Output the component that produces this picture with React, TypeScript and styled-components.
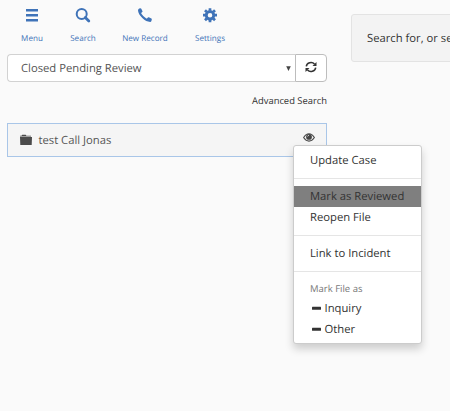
import React from 'react';
import styled, { createGlobalStyle } from 'styled-components';

const GlobalStyle = createGlobalStyle`
  * { box-sizing: border-box; }
  html, body { margin: 0; padding: 0; background: #fafafa; overflow: hidden; }
  body {
    font-family: "Open Sans", sans-serif;
    font-size: 11.25px;
    color: #333;
    text-rendering: geometricPrecision;
  }
`;

const Page = styled.div`
  width: 450px;
  height: 411px;
  display: flex;
  overflow: hidden;
  background: #fafafa;
`;

const Sidebar = styled.div`
  width: 327px;
  flex: none;
  padding-left: 7px;
`;

const Toolbar = styled.nav`
  height: 54px;
  display: grid;
  grid-template-columns: 50px 52px 72px 58px;
`;

const ToolButton = styled.a`
  display: flex;
  flex-direction: column;
  align-items: center;
  padding-top: 7px;
  color: #3f73b8;
  font-size: 8.1px;
  line-height: 12px;
  white-space: nowrap;
  svg { margin-bottom: 7.5px; }
`;

const FilterGroup = styled.div`
  display: flex;
  height: 28px;
`;

const Select = styled.div`
  flex: 1;
  display: flex;
  align-items: center;
  justify-content: space-between;
  padding: 0 4px 0 13px;
  background: #fff;
  border: 1px solid #d2d2d2;
  border-right: 0;
  border-radius: 4px 0 0 4px;
  color: #555;
`;

const RefreshButton = styled.div`
  width: 32px;
  display: flex;
  align-items: center;
  justify-content: center;
  padding-bottom: 2px;
  background: #fff;
  border: 1px solid #bdbdbd;
  border-radius: 0 4px 4px 0;
`;

const Advanced = styled.div`
  margin-top: 10px;
  height: 31px;
  line-height: 17px;
  text-align: right;
  font-size: 9.4px;
`;

const Case = styled.div`
  position: relative;
  height: 34px;
  display: flex;
  align-items: center;
  padding: 0 12px 0 12px;
  background: #f5f5f5;
  border: 1px solid #a9c6e8;
  color: #555;
`;

const CaseName = styled.span`
  flex: 1;
  margin-left: 6.500px;
`;

const Menu = styled.div`
  position: absolute;
  top: 21px;
  left: 285px;
  width: 129px;
  height: 199px;
  padding-top: 4px;
  background: #fff;
  border: 1px solid #ccc;
  border-radius: 3px;
  box-shadow: 0 5px 9px rgba(0, 0, 0, 0.18);
  color: #333;
`;

const MenuItem = styled.div<{ $active?: boolean }>`
  height: 20.6px;
  display: flex;
  align-items: center;
  padding-left: 16px;
  background: ${(p) => (p.$active ? '#7f7f7f' : 'transparent')};
  white-space: nowrap;
  svg { margin: 0 3.5px 0 2px; }
`;

const MenuHeader = styled.div`
  height: 18.5px;
  display: flex;
  align-items: center;
  padding-left: 16px;
  color: #777;
  font-size: 9.5px;
`;

const Divider = styled.div`
  height: 1px;
  margin: 7.4px 0;
  background: #e5e5e5;
`;

const Well = styled.div`
  margin: 14px 0 0 24px;
  width: 240px;
  height: 48px;
  flex: none;
  padding: 0 15px;
  line-height: 47px;
  background: #f3f3f3;
  border: 1px solid #e3e3e3;
  border-radius: 3px;
  white-space: nowrap;
`;

const MenuIcon = () => (
  <svg width="16" height="18" viewBox="0 0 16 18">
    <path d="M2 3.2h12M2 8.2h12M2 13.2h12" stroke="currentColor" strokeWidth="2.4" />
  </svg>
);

const SearchIcon = () => (
  <svg width="16" height="18" viewBox="0 0 16 18" fill="none" stroke="currentColor">
    <circle cx="6.7" cy="7" r="5" strokeWidth="2" />
    <path d="M10.3 10.6l3.5 3.5" strokeWidth="2.8" strokeLinecap="round" />
  </svg>
);

const PhoneIcon = () => (
  <svg width="16" height="18" viewBox="0 0 16 18">
    <path
      fill="currentColor"
      d="M2.2 1.6 3.5 1.3q.5 0 .8.5l1.2 2.4q.2.6-.3.9l-.8.6q-.3.5 0 1 1.9 3 4.9 4.7.6.3.9-.1l.7-.9q.4-.4.9-.1l2.6 1.3q.6.3.4.9l-.4 1.4q-.3.9-1.3 1-3.8-.1-7.8-3.9T1 3.5Q1.1 2 2.2 1.6z"
    />
  </svg>
);

const GearIcon = () => (
  <svg width="16" height="18" viewBox="0 0 16 18" fill="none" stroke="currentColor">
    <circle cx="8" cy="8.2" r="3.75" strokeWidth="2.9" />
    <g strokeWidth="2.7">
      <path d="M8 1.2v2.3M8 12.9v2.3M1 8.2h2.3M12.7 8.2H15" />
      <path d="M3 3.2l1.7 1.7M11.3 11.5l1.7 1.7M13 3.2l-1.7 1.7M4.7 11.5L3 13.2" />
    </g>
  </svg>
);

const RefreshIcon = () => (
  <svg width="12" height="12" viewBox="0 0 12 12" fill="none" stroke="#333" strokeWidth="1.5">
    <path d="M1.3 5.3C1.8 1.5 7 .2 9.5 3M10.7 6.7C10.2 10.5 5 11.8 2.5 9" />
    <path d="M11.5 1.1v4H7.5zM.5 10.9v-4h4z" fill="#333" stroke="none" />
  </svg>
);

const ArrowIcon = () => (
  <svg width="5" height="5" viewBox="0 0 5 5">
    <path d="M.2.2h4.6L2.5 5z" fill="#444" />
  </svg>
);

const FolderIcon = () => (
  <svg width="12" height="12" viewBox="0 0 12 12">
    <path d="M0 2.4V1.7h1.5L2.2.7h3.5l.7 1H11v.7zM0 3h12l-.3 8H.3z" fill="#4b4b4b" />
  </svg>
);

const EyeIcon = () => (
  <svg width="12" height="9" viewBox="0 0 12 9">
    <path d="M.6 4.5Q3 .8 6 .8t5.4 3.7Q9 8.1 6 8.1T.6 4.5z" fill="#f5f5f5" stroke="#4b4b4b" strokeWidth="1.1" />
    <circle cx="6" cy="3.9" r="2.9" fill="#444" />
    <path d="M4.6 3.5Q4.8 2.4 6 2.3" fill="none" stroke="#eee" strokeWidth=".8" />
  </svg>
);

const MinusIcon = () => (
  <svg width="9" height="5" viewBox="0 0 9 5">
    <rect y="0.8" width="9" height="3" rx=".5" fill="#333" />
  </svg>
);

const EyeSlot = styled.span`
  display: flex;
  margin-bottom: 5px;
  margin-right: -1px;
`;

export default function App() {
  return (
    <>
      <GlobalStyle />
      <Page>
        <Sidebar>
          <Toolbar>
            <ToolButton><MenuIcon />Menu</ToolButton>
            <ToolButton><SearchIcon />Search</ToolButton>
            <ToolButton><PhoneIcon />New Record</ToolButton>
            <ToolButton><GearIcon />Settings</ToolButton>
          </Toolbar>
          <FilterGroup>
            <Select>Closed Pending Review<ArrowIcon /></Select>
            <RefreshButton><RefreshIcon /></RefreshButton>
          </FilterGroup>
          <Advanced>Advanced Search</Advanced>
          <Case>
            <FolderIcon />
            <CaseName>test Call Jonas</CaseName>
            <EyeSlot><EyeIcon /></EyeSlot>
            <Menu>
              <MenuItem>Update Case</MenuItem>
              <Divider />
              <MenuItem $active>Mark as Reviewed</MenuItem>
              <MenuItem>Reopen File</MenuItem>
              <Divider />
              <MenuItem>Link to Incident</MenuItem>
              <Divider />
              <MenuHeader>Mark File as</MenuHeader>
              <MenuItem><MinusIcon />Inquiry</MenuItem>
              <MenuItem><MinusIcon />Other</MenuItem>
            </Menu>
          </Case>
        </Sidebar>
        <Well>Search for, or select a record</Well>
      </Page>
    </>
  );
}
